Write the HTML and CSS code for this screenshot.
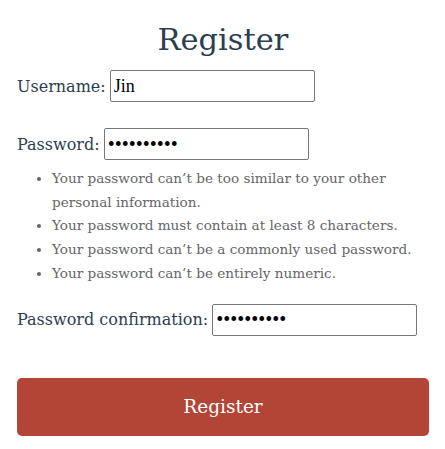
FILE: index.html
```html
<!DOCTYPE html>
<html>
<head>
<meta charset="utf-8">
<link rel="stylesheet" href="styles.css">
</head>
<body>
<div class="page">
  <h1 class="title">Register</h1>
  <form class="form">
    <p class="row"><label class="label" for="u">Username:</label><input class="field" id="u" type="text" value="Jin"></p>
    <p class="row"><label class="label" for="p1">Password:</label><input class="field secret" id="p1" type="password" value="abcdefghij"></p>
    <ul class="help">
      <li>Your password can’t be too similar to your other personal information.</li>
      <li>Your password must contain at least 8 characters.</li>
      <li>Your password can’t be a commonly used password.</li>
      <li>Your password can’t be entirely numeric.</li>
    </ul>
    <p class="row"><label class="label" for="p2">Password confirmation:</label><input class="field secret" id="p2" type="password" value="abcdefghij"></p>
    <button class="btn" type="button">Register</button>
  </form>
</div>
</body>
</html>
```
FILE: styles.css
```css
html, body { margin: 0; padding: 0; background: #fff; }
.page {
  padding: 0 16px 0 17px;
  font-family: Georgia, "DejaVu Serif", serif;
  color: #2c3e50;
}
.title {
  margin: 22px 0 12px;
  text-align: center;
  font-weight: normal;
  font-size: 30.5px;
  line-height: 36px;
}
.form { margin: 0; }
.row {
  margin: 0 0 26px;
  display: flex;
  align-items: center;
  font-size: 16px;
}
.label { margin-right: 4px; }
.field {
  width: 205px;
  height: 32px;
  box-sizing: border-box;
  border: 1px solid #767676;
  border-radius: 2px;
  padding: 1px 3px;
  font-family: "Liberation Serif", serif;
  font-size: 18px;
  color: #000;
}
.secret { font-size: 20px; }
.help {
  margin: -19px 0 18px;
  padding-left: 35px;
  color: #666;
  font-size: 13.6px;
  line-height: 23.7px;
}
.btn {
  display: block;
  width: 100%;
  height: 58px;
  margin-top: 42px;
  border: none;
  border-radius: 5px;
  background: #b34536;
  color: #fff;
  font-family: Georgia, "DejaVu Serif", serif;
  font-size: 18.5px;
}
```
